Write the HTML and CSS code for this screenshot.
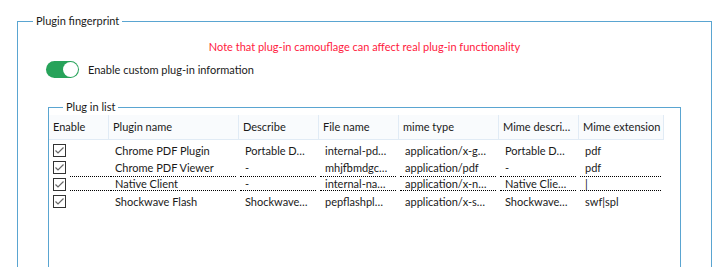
FILE: index.html
```html
<!DOCTYPE html>
<html lang="en">
<head>
  <meta charset="UTF-8">
  <title>Plugin fingerprint</title>
  <link rel="stylesheet" href="styles.css">
</head>
<body>
  <fieldset class="group">
    <legend>Plugin fingerprint</legend>
    <p class="note">Note that plug-in camouflage can affect real plug-in functionality</p>

    <div class="switch-row">
      <span class="switch on"><span class="knob"></span></span>
      <span>Enable custom plug-in information</span>
    </div>

    <fieldset class="group list">
      <legend>Plug in list</legend>
      <div class="grid">
        <div class="row head">
          <div class="cell">Enable</div>
          <div class="cell">Plugin name</div>
          <div class="cell">Describe</div>
          <div class="cell">File name</div>
          <div class="cell">mime type</div>
          <div class="cell">Mime descri…</div>
          <div class="cell">Mime extension</div>
        </div>

        <div class="body">
          <div class="row">
            <div class="cell check"><svg class="box" width="13" height="13" viewBox="0 0 13 13"><rect x="0.5" y="0.5" width="12" height="12" fill="#fff" stroke="#333"/><polyline points="2.5,6.5 5,9 10.5,3.5" fill="none" stroke="#666" stroke-width="1.2"/></svg></div>
            <div class="cell">Chrome PDF Plugin</div>
            <div class="cell">Portable D…</div>
            <div class="cell">internal-pd…</div>
            <div class="cell">application/x-g…</div>
            <div class="cell">Portable D…</div>
            <div class="cell">pdf</div>
          </div>
          <div class="row">
            <div class="cell check"><svg class="box" width="13" height="13" viewBox="0 0 13 13"><rect x="0.5" y="0.5" width="12" height="12" fill="#fff" stroke="#333"/><polyline points="2.5,6.5 5,9 10.5,3.5" fill="none" stroke="#666" stroke-width="1.2"/></svg></div>
            <div class="cell">Chrome PDF Viewer</div>
            <div class="cell">-</div>
            <div class="cell">mhjfbmdgc…</div>
            <div class="cell">application/pdf</div>
            <div class="cell">-</div>
            <div class="cell">pdf</div>
          </div>
          <div class="row focused">
            <div class="cell check"><svg class="box" width="13" height="13" viewBox="0 0 13 13"><rect x="0.5" y="0.5" width="12" height="12" fill="#fff" stroke="#333"/><polyline points="2.5,6.5 5,9 10.5,3.5" fill="none" stroke="#666" stroke-width="1.2"/></svg><span class="fill"></span></div>
            <div class="cell"><span class="fill">Native Client</span></div>
            <div class="cell"><span class="fill">-</span></div>
            <div class="cell"><span class="fill">internal-na…</span></div>
            <div class="cell"><span class="fill">application/x-n…</span></div>
            <div class="cell"><span class="fill">Native Clie…</span></div>
            <div class="cell"><span class="fill">|</span></div>
          </div>
          <div class="row">
            <div class="cell check"><svg class="box" width="13" height="13" viewBox="0 0 13 13"><rect x="0.5" y="0.5" width="12" height="12" fill="#fff" stroke="#333"/><polyline points="2.5,6.5 5,9 10.5,3.5" fill="none" stroke="#666" stroke-width="1.2"/></svg></div>
            <div class="cell">Shockwave Flash</div>
            <div class="cell">Shockwave…</div>
            <div class="cell">pepflashpl…</div>
            <div class="cell">application/x-s…</div>
            <div class="cell">Shockwave…</div>
            <div class="cell">swf|spl</div>
          </div>
        </div>
      </div>
    </fieldset>
  </fieldset>
</body>
</html>
```

FILE: styles.css
```css
html, body {
  margin: 0;
  padding: 0;
  background: #fff;
  overflow: hidden;
}
body {
  font-family: Lato, "Noto Sans", sans-serif;
  font-size: 11px;
  line-height: 15px;
  color: #1a1a1a;
  padding: 13px 0 0 17px;
  height: 267px;
  box-sizing: border-box;
}
.group {
  border: 1px solid #5aa5d1;
  margin: 0;
  padding: 0;
  width: 695px;
  height: 400px;
  box-sizing: border-box;
  min-width: 0;
}
.group > legend {
  margin-left: 15px;
  padding: 0 3px;
  line-height: 16px;
  color: #1a1a1a;
}
.note {
  margin: 10px 0 0;
  color: #ff1a40;
  text-align: center;
}
.switch-row {
  display: flex;
  align-items: center;
  gap: 9px;
  margin: 7px 0 0 28px;
}
.switch {
  display: inline-flex;
  justify-content: flex-end;
  align-items: center;
  width: 33px;
  height: 17px;
  border-radius: 9px;
  background: #27a35a;
  box-sizing: border-box;
  padding: 1px;
}
.knob {
  width: 15px;
  height: 15px;
  border-radius: 50%;
  background: #fff;
}
.group.list {
  margin: 21px 0 0 30px;
  width: 633px;
}
.group.list > legend {
  margin-left: 14px;
}
.row {
  display: grid;
  grid-template-columns: 60px 130px 80px 80px 100px 80px 85px;
  width: 615px;
}
.head {
  height: 25px;
  background: #f9fbfd;
  border-bottom: 1px solid #e1ebf5;
  box-sizing: border-box;
}
.head .cell {
  border-right: 1px solid #e1ebf5;
  line-height: 24px;
  padding-left: 4px;
}
.cell {
  padding-left: 5px;
  white-space: nowrap;
}
.body {
  padding-top: 2px;
}
.body .row {
  height: 17px;
  line-height: 17px;
}
.body .cell {
  padding-left: 6px;
}
.body .cell.check {
  padding-left: 4px;
  display: flex;
  align-items: center;
}
.box {
  display: block;
  flex: none;
}
.focused .cell {
  padding-left: 1px;
  padding-right: 3px;
  display: flex;
  align-items: flex-start;
}
.focused .cell.check {
  padding-left: 4px;
  padding-right: 0;
  align-items: center;
}
.fill {
  flex: 1;
  display: block;
  height: 13px;
  line-height: 13px;
  border-top: 1px dotted #000;
  border-bottom: 1px dotted #000;
  padding-left: 5px;
}
.check .fill {
  margin-left: 4px;
  padding-left: 0;
  align-self: flex-start;
}
```
